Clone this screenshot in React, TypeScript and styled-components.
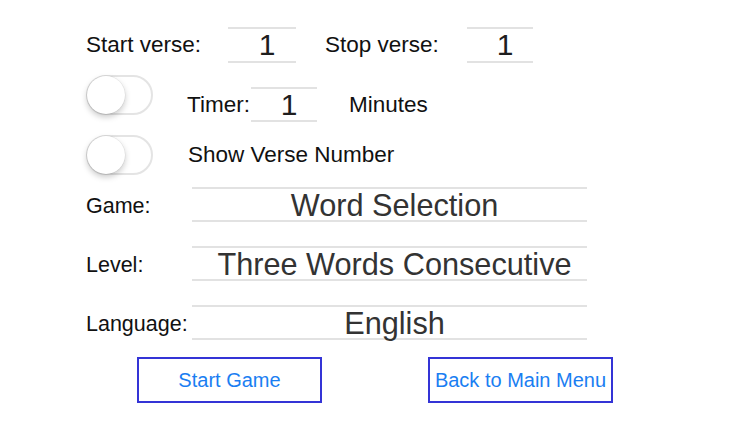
import * as React from 'react';
import styled, { createGlobalStyle } from 'styled-components';

const textColor = "#111111";
const pickerColor = "#333333";
const lineColor = "#e2e2e2";
const blue = "#1a7ef2";

const GlobalStyle = createGlobalStyle`
  html, body {
    margin: 0;
    padding: 0;
    background: #ffffff;
  }
  body {
    font-family: "Liberation Sans", Arial, sans-serif;
    color: ${textColor};
  }
`;

const Page = styled.div`
  width: 750px;
  height: 422px;
  box-sizing: border-box;
  padding: 27px 0 0 86px;
  display: flex;
  flex-direction: column;
  overflow: hidden;
`;

const Row = styled.div<{ $top?: number }>`
  display: flex;
  align-items: center;
  margin-top: ${(p) => p.$top || 0}px;
`;

const TopRow = styled(Row)`
  align-items: flex-start;
`;

const Label = styled.span<{ $width?: number; $size?: number; $drop?: number }>`
  display: inline-block;
  width: ${(p) => (p.$width ? `${p.$width}px` : "auto")};
  font-size: ${(p) => p.$size || 22.5}px;
  padding-top: ${(p) => p.$drop || 0}px;
  white-space: nowrap;
`;

const NumberBox = styled.div<{ $width: number; $height?: number }>`
  width: ${(p) => p.$width}px;
  height: ${(p) => p.$height || 32}px;
  border-top: 2px solid ${lineColor};
  border-bottom: 2px solid ${lineColor};
  display: flex;
  align-items: center;
  justify-content: center;
  font-size: 30px;
  color: #1e1e1e;
`;

const Digit = styled.span`
  padding-left: 10px;
`;

const Spacer = styled.div<{ $w: number }>`
  width: ${(p) => p.$w}px;
  flex: none;
`;

const Track = styled.div`
  width: 67px;
  height: 40px;
  box-sizing: border-box;
  border: 2px solid #e4e4e4;
  border-radius: 20px;
  background: #ffffff;
  position: relative;
  flex: none;
`;

const Knob = styled.div`
  position: absolute;
  left: -1px;
  top: -1px;
  width: 38px;
  height: 38px;
  border-radius: 50%;
  background: #ffffff;
  box-shadow: 0 3px 6px rgba(0, 0, 0, 0.22), 0 0 0 0.5px rgba(0, 0, 0, 0.08);
`;

const TimerGroup = styled.div`
  display: flex;
  align-items: center;
  margin-top: 12px;
  margin-left: 34px;
`;

const Picker = styled.div`
  width: 385px;
  height: 31px;
  box-sizing: content-box;
  border-top: 2px solid ${lineColor};
  border-bottom: 2px solid ${lineColor};
  display: flex;
  align-items: center;
  justify-content: center;
  padding-left: 10px;
  font-size: 30.7px;
  line-height: 1;
  color: ${pickerColor};
  white-space: nowrap;
`;

const PickerText = styled.span`
  padding-top: 3px;
`;

const ButtonRow = styled.div`
  display: flex;
  margin-top: 17px;
  margin-left: 51px;
  gap: 106px;
`;

const Button = styled.button`
  width: 185px;
  height: 46px;
  box-sizing: border-box;
  border: 2px solid #3434d6;
  background: #ffffff;
  color: ${blue};
  font-family: "Liberation Sans", Arial, sans-serif;
  font-size: 20px;
  padding: 0;
  white-space: nowrap;
`;

const Toggle: React.FC = () => (
  <Track>
    <Knob />
  </Track>
);

const PickerRow: React.FC<{ label: string; value: string; top: number }> = ({ label, value, top }) => (
  <Row $top={top}>
    <Label $width={106} $size={21.5} $drop={3}>{label}</Label>
    <Picker>
      <PickerText>{value}</PickerText>
    </Picker>
  </Row>
);

const App: React.FC = () => {
  return (
    <Page>
      <GlobalStyle />
      <Row>
        <Label $width={142}>Start verse:</Label>
        <NumberBox $width={68}><Digit>1</Digit></NumberBox>
        <Spacer $w={29} />
        <Label $width={142}>Stop verse:</Label>
        <NumberBox $width={66}><Digit>1</Digit></NumberBox>
      </Row>
      <TopRow $top={12}>
        <Toggle />
        <TimerGroup>
          <Label $width={64}>Timer:</Label>
          <NumberBox $width={66} $height={31}><Digit>1</Digit></NumberBox>
          <Spacer $w={32} />
          <Label>Minutes</Label>
        </TimerGroup>
      </TopRow>
      <Row $top={13}>
        <Toggle />
        <Spacer $w={35} />
        <Label>Show Verse Number</Label>
      </Row>
      <PickerRow label="Game:" value="Word Selection" top={12} />
      <PickerRow label="Level:" value="Three Words Consecutive" top={24} />
      <PickerRow label="Language:" value="English" top={24} />
      <ButtonRow>
        <Button>Start Game</Button>
        <Button>Back to Main Menu</Button>
      </ButtonRow>
    </Page>
  );
};

export default App;
